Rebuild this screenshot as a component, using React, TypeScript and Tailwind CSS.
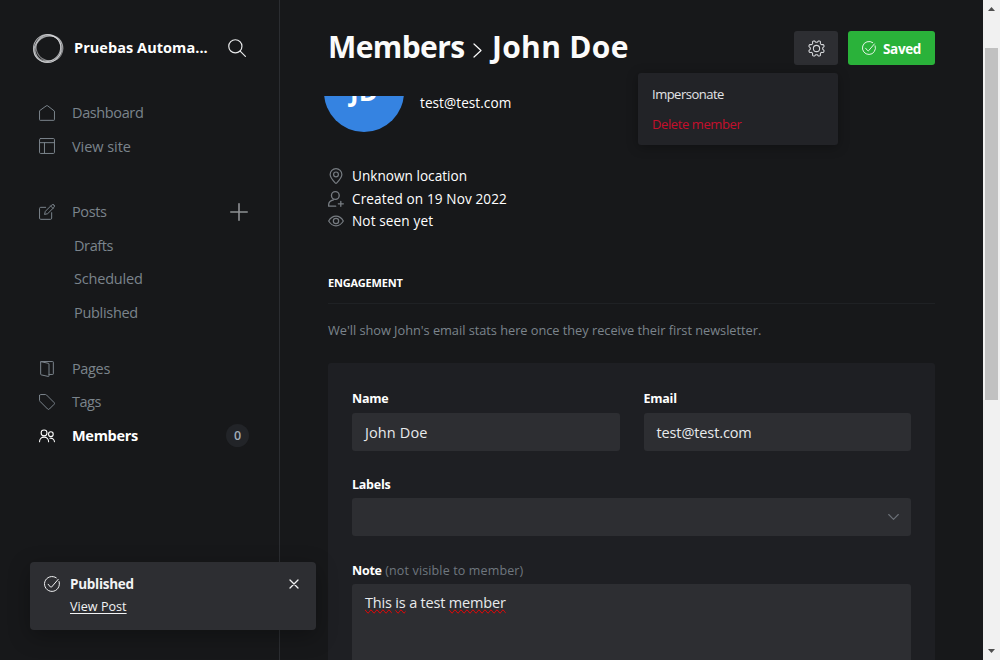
import type { ReactNode } from "react";

type IconProps = { className?: string; box?: string; sw?: number; children: ReactNode };

function Icon({ className = "size-4", box = "0 0 24 24", sw = 1.5, children }: IconProps) {
  return (
    <svg viewBox={box} className={`shrink-0 ${className}`} fill="none" stroke="currentColor" strokeWidth={sw} strokeLinecap="round" strokeLinejoin="round">
      {children}
    </svg>
  );
}

const CheckRing = ({ className }: { className: string }) => (
  <Icon className={className}>
    <path d="M6.200 12.400l3.600 4.200a1 1 0 0 0 1.600-.1L21.300 5" />
    <path d="M22.600 8.300A11.200 11.200 0 1 1 18.400 2.700" />
  </Icon>
);

// Eight rounded teeth with a notch at the top, traced as a polar curve.
const gearOutline =
  "M" +
  Array.from({ length: 96 }, (_, i) => {
    const a = (i / 96) * Math.PI * 2;
    const r = 10 + 1.35 * Math.tanh(-2 * Math.cos(8 * a));
    return `${(12 + r * Math.sin(a)).toFixed(2)} ${(12 - r * Math.cos(a)).toFixed(2)}`;
  }).join("L") +
  "Z";

function NavRow({ icon, label, tracking, active, children }: { icon: ReactNode; label: string; tracking: string; active?: boolean; children?: ReactNode }) {
  return (
    <div className={`flex h-[33.6px] items-center pr-[31px] pl-[39px] ${active ? "font-bold text-white" : "text-[#7b848c]"}`}>
      {icon}
      <span className={`ml-[17px] flex-1 ${tracking}`}>{label}</span>
      {children}
    </div>
  );
}

function SubRow({ label, tracking }: { label: string; tracking: string }) {
  return <div className={`flex h-[33.6px] items-center pl-[74px] text-[#7b848c] ${tracking}`}>{label}</div>;
}

function Sidebar() {
  return (
    <aside className="flex w-[280px] shrink-0 flex-col border-r border-[#2b2d31] text-[14.5px]">
      <div className="flex h-24 items-center pr-[33px] pl-8">
        <svg viewBox="0 0 32 32" className="size-8 shrink-0" fill="none" stroke="#dcdde0">
          <circle cx="15.400" cy="16.500" r="13.900" strokeWidth="1.100" opacity=".75" />
          <ellipse cx="17.200" cy="15" rx="13.600" ry="13" strokeWidth="1" opacity=".55" transform="rotate(35 16 16)" />
          <ellipse cx="15" cy="16.200" rx="14" ry="12.300" strokeWidth="1" opacity=".7" transform="rotate(-40 16 16)" />
          <ellipse cx="16.800" cy="15.600" rx="12.200" ry="13.900" strokeWidth="1" opacity=".6" transform="rotate(65 16 16)" />
          <ellipse cx="16" cy="16.800" rx="13" ry="14" strokeWidth=".8" opacity=".45" transform="rotate(10 16 16)" />
        </svg>
        <span className="ml-[10px] flex-1 font-bold tracking-[0.05px] text-white">Pruebas Automa...</span>
        <Icon className="size-[18px] text-[#e8e9ea]" sw={1.6}>
          <circle cx="9.8" cy="9.8" r="8.8" />
          <path d="M16.200 16.200l7 7" />
        </Icon>
      </div>

      <nav className="flex flex-col">
        <NavRow label="Dashboard" tracking="tracking-[-0.38px]" icon={
          <Icon><path d="M.8 9.200V22a1 1 0 0 0 1 1h20.400a1 1 0 0 0 1-1V9.200L13 1.200a1.600 1.600 0 0 0-2 0z" /></Icon>
        } />
        <NavRow label="View site" tracking="tracking-[-0.04px]" icon={
          <Icon><rect x=".8" y=".8" width="22.400" height="22.400" rx="1.600" /><path d="M.8 7h22.400M8.200 7v16.200" /></Icon>
        } />

        <div className="mt-8 flex flex-col">
          <NavRow label="Posts" tracking="tracking-[-0.4px]" icon={
            <Icon>
              <path d="M19 13v8.200a1.800 1.800 0 0 1-1.800 1.800H2.600A1.800 1.800 0 0 1 .8 21.200V6.800A1.800 1.800 0 0 1 2.600 5H10" />
              <path d="M22.500 1.500a2.450 2.450 0 0 1 0 3.500L13 14.500 8.300 15.700 9.500 11 19 1.500a2.450 2.450 0 0 1 3.500 0zM17.500 3l3.500 3.500" />
            </Icon>
          }>
            <Icon className="size-[18px] text-[#8f9194]" box="0 0 18 18" sw={1.6}>
              <path d="M9 .8v16.400M.8 9h16.400" />
            </Icon>
          </NavRow>
          <SubRow label="Drafts" tracking="tracking-[-0.4px]" />
          <SubRow label="Scheduled" tracking="tracking-[-0.2px]" />
          <SubRow label="Published" tracking="tracking-[-0.3px]" />
        </div>

        <div className="mt-[22.4px] flex flex-col">
          <NavRow label="Pages" tracking="tracking-[-0.35px]" icon={
            <Icon>
              <path d="M2.500 1.500v18.300c0 .5.3.9.8 1l10.700 2.400c.6.1 1-.3 1-.8V4.500c0-.5-.3-.9-.8-1z" />
              <path d="M2.500 1.500C2.500 1 2.900.8 3.300.8h17.200a1 1 0 0 1 1 1v17.400a1 1 0 0 1-1 1H15" />
            </Icon>
          } />
          <NavRow label="Tags" tracking="tracking-[-0.5px]" icon={
            <Icon><path d="M.8 2.300v7.200c0 .5.2 1 .6 1.400l11.500 11.600a1.900 1.900 0 0 0 2.700 0l7-7a1.900 1.900 0 0 0 0-2.700L11.200 1.400A2 2 0 0 0 9.800.8H2.300A1.500 1.500 0 0 0 .8 2.300z" /></Icon>
          } />
          <NavRow label="Members" tracking="tracking-[-0.3px]" active icon={
            <Icon sw={1.6}>
              <circle cx="7.600" cy="7.400" r="4.400" />
              <path d="M.8 20.500a6.800 6.800 0 0 1 13.600 0" />
              <circle cx="17.800" cy="9.200" r="3.500" />
              <path d="M16.300 15.300a5.700 5.700 0 0 1 6.900 5.200" />
            </Icon>
          }>
            <span className="-mr-px flex size-[23px] items-center justify-center rounded-full bg-[#222428] text-[12.500px] font-semibold text-[#a3adb8]">0</span>
          </NavRow>
        </div>
      </nav>
    </aside>
  );
}

function MetaRow({ icon, label, tracking }: { icon: ReactNode; label: string; tracking: string }) {
  return (
    <div className="flex h-[22.6px] items-center gap-2">
      {icon}
      <span className={`text-[13.600px] ${tracking}`}>{label}</span>
    </div>
  );
}

function Field({ label, value, tracking }: { label: string; value: string; tracking: string }) {
  return (
    <div className="flex-1">
      <div className="h-[22px] text-[12.500px] leading-4 font-bold tracking-[-0.25px]">{label}</div>
      <div className={`flex h-[38px] items-center rounded-[3px] bg-[#2d2e32] px-[13px] pt-[2px] text-[14.500px] text-[#e8eaec] ${tracking}`}>{value}</div>
    </div>
  );
}

const misspelt = "[text-decoration-line:spelling-error]";

function Main() {
  return (
    <main className="flex h-[660px] w-[703px] shrink-0 flex-col overflow-hidden pr-12 pl-12 text-white">
      <header className="relative flex h-24 shrink-0 items-center">
        <h1 className="mt-[-2px] flex flex-1 items-center text-[30px] leading-10 font-bold text-[#fbfbfb]">
          <span className="tracking-[-0.6px]">Members</span>
          <Icon className="mt-[6px] ml-2 h-[15px] w-[9px]" box="0 0 9 15" sw={1.2}><path d="M1 1l7 6.500L1 14" /></Icon>
          <span className="ml-[10.500px] tracking-[0.3px]">John Doe</span>
        </h1>
        <button className="flex h-[34px] w-11 items-center justify-center rounded-[3px] bg-[#2d2e32] text-[#d5d7da]">
          <Icon className="size-[17px]" sw={1.5}>
            <circle cx="12" cy="12" r="4.400" />
            <path d={gearOutline} />
          </Icon>
        </button>
        <button className="ml-[10px] flex h-[34px] w-[87px] items-center rounded-[3px] bg-[#2ab23a] pl-[14px] text-[13.500px] font-bold tracking-[-0.35px]">
          <CheckRing className="size-[14px]" />
          <span className="mt-[3px] ml-[7px]">Saved</span>
        </button>
        <div className="absolute top-[73px] left-[310px] z-10 flex h-[72px] w-[200px] flex-col rounded-[3px] bg-[#222327] px-[14px] pt-[6px] text-[13px] leading-[30px] shadow-[0_2px_12px_rgba(0,0,0,0.3)]">
          <span className="tracking-[-0.5px] text-[#e3e4e6]">Impersonate</span>
          <span className="tracking-[-0.4px] text-[#c50f2c]">Delete member</span>
        </div>
      </header>

      <section className="flex h-9 shrink-0">
        <div className="-ml-1 flex h-9 w-20 shrink-0 items-end overflow-hidden">
          <div className="flex size-20 shrink-0 items-center justify-center rounded-full bg-[#3583e1] pb-[2px] text-[26px] font-bold">JD</div>
        </div>
        <span className="mt-[-3px] ml-4 text-[13.600px] leading-5 tracking-[0.05px]">test@test.com</span>
      </section>

      <section className="mt-[33px] shrink-0">
        <MetaRow label="Unknown location" tracking="tracking-[0.02px]" icon={
          <Icon className="size-4 text-[#777c82]" sw={1.8}>
            <circle cx="12" cy="9.600" r="3.600" />
            <path d="M12 1a8.800 8.800 0 0 1 8.800 8.800c0 4.200-5.600 10.500-7.900 12.900a1.250 1.250 0 0 1-1.800 0C8.800 20.300 3.200 14 3.200 9.800A8.800 8.800 0 0 1 12 1z" />
          </Icon>
        } />
        <MetaRow label="Created on 19 Nov 2022" tracking="tracking-[0.11px]" icon={
          <Icon className="size-4 text-[#777c82]" sw={2}>
            <circle cx="11" cy="6.800" r="5.800" />
            <path d="M11.500 22.800H1v-2.300c0-4 3.400-6.200 7.200-7.200M19.200 15.500v7.500M15.500 19.200h7.500" />
          </Icon>
        } />
        <MetaRow label="Not seen yet" tracking="tracking-[0.12px]" icon={
          <Icon className="size-4 text-[#777c82]" sw={1.8}>
            <path d="M1 12c2.200-3.700 6.300-7.200 11-7.200S20.800 8.300 23 12c-2.200 3.700-6.300 7.200-11 7.200S3.200 15.700 1 12z" />
            <circle cx="12" cy="12" r="4" />
          </Icon>
        } />
      </section>

      <section className="shrink-0">
        <h2 className="flex h-[71px] items-center border-b border-[#1f2124] pt-[31px] text-[11px] leading-4 font-bold tracking-[-0.2px] whitespace-nowrap">ENGAGEMENT</h2>
        <p className="mt-4 h-5 text-[12.800px] leading-5 tracking-[-0.035px] whitespace-nowrap text-[#7b848c]">We'll show John's email stats here once they receive their first newsletter.</p>
      </section>

      <section className="mt-[23px] h-[340px] shrink-0 rounded-t-[3px] bg-[#1e1f23] px-6 pt-[28px]">
        <div className="flex gap-6">
          <Field label="Name" value="John Doe" tracking="tracking-[0.12px]" />
          <Field label="Email" value="test@test.com" tracking="tracking-[-0.12px]" />
        </div>
        <div className="mt-[25px] h-[22px] text-[12.500px] leading-[18px] font-bold tracking-[-0.25px]">Labels</div>
        <div className="flex h-[38px] items-center justify-end rounded-[3px] bg-[#2d2e32] pr-[12px] text-[#6b7077]">
          <Icon className="h-[6px] w-[11px]" box="0 0 11 6" sw={1.1}><path d="M.7.500l4.800 4.800L10.300.500" /></Icon>
        </div>
        <div className="mt-[26px] h-[22px] text-[12.500px] leading-[18px] font-bold tracking-[-0.25px]">
          Note <span className="ml-[0.5px] font-normal tracking-[0.14px] text-[#6f777f]">(not visible to member)</span>
        </div>
        <div className="h-[120px] rounded-t-[3px] bg-[#2d2e32] px-[13px] pt-[8px] text-[14.500px] leading-[21px] tracking-[-0.18px] text-[#e8eaec]">
          <span className={misspelt}>This</span> <span className={misspelt}>is</span> a test <span className={misspelt}>member</span>
        </div>
      </section>
    </main>
  );
}

function Scrollbar() {
  return (
    <div className="flex w-[17px] shrink-0 flex-col items-center justify-between bg-[#f1f1f1]">
      <div className="flex w-full flex-col items-center">
        <svg viewBox="0 0 7 4" className="mt-[7px] h-1 w-[7px]" fill="#505050"><path d="M3.500 0L7 4H0z" /></svg>
        <div className="mt-[37px] h-[352px] w-[13px] bg-[#c1c1c1]" />
      </div>
      <svg viewBox="0 0 7 4" className="mb-[7px] h-1 w-[7px]" fill="#505050"><path d="M0 0h7L3.500 4z" /></svg>
    </div>
  );
}

function Toast() {
  return (
    <div className="absolute top-[562px] left-[30px] flex h-[68px] w-[286px] rounded-[4px] bg-[#2d2e32] pt-3 pr-4 pl-[14px] text-[#f2f3f4] shadow-[0_6px_22px_rgba(0,0,0,0.3)]">
      <div className="mt-[2px]"><CheckRing className="size-4" /></div>
      <div className="ml-[10px] flex-1">
        <div className="text-[13.500px] leading-5 font-bold tracking-[-0.27px]">Published</div>
        <div className="mt-[3px] text-[12.600px] leading-5 tracking-[0.02px] underline underline-offset-2">View Post</div>
      </div>
      <Icon className="mt-[4px] size-3" box="0 0 12 12" sw={1.3}><path d="M2 2l8 8M10 2l-8 8" /></Icon>
    </div>
  );
}

export default function App() {
  return (
    <div className="relative flex h-[660px] w-[1000px] overflow-hidden bg-[#17181a] font-['Open_Sans','Noto_Sans',sans-serif]">
      <Sidebar />
      <Main />
      <Scrollbar />
      <Toast />
    </div>
  );
}
